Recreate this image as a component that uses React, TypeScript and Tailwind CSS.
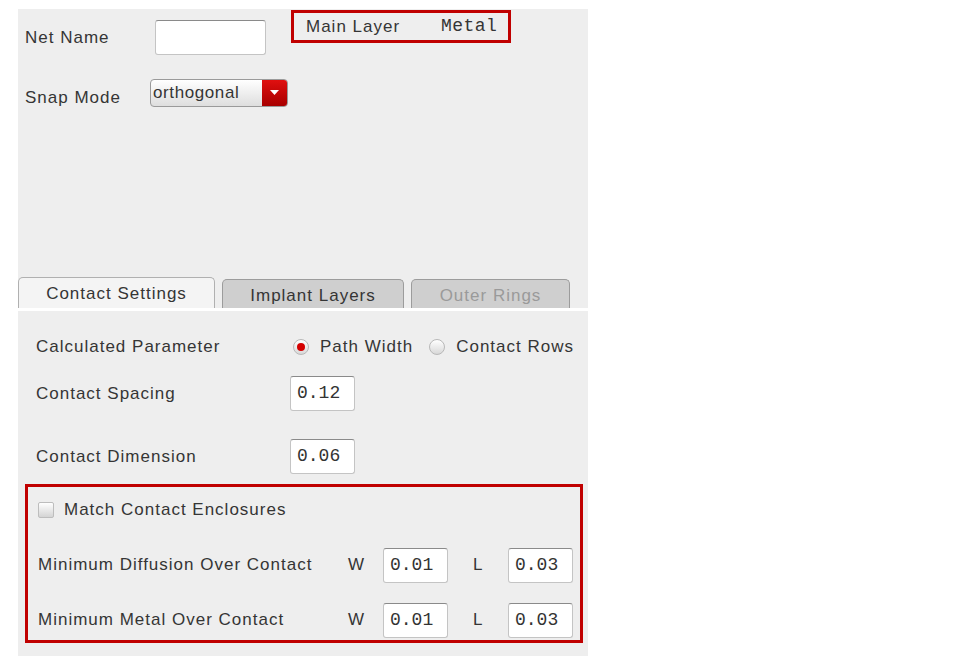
import React from 'react';

const sans = { fontFamily: '"Liberation Sans", Arial, sans-serif' };

function Field({ value, className = '' }: { value: string; className?: string }) {
  return (
    <div
      className={`flex h-[35px] w-[65px] items-center rounded-[3px] border border-[#c4c4c4] border-t-[#8a8a8a] bg-white pl-[6px] font-['Liberation_Mono',monospace] text-[18px] tracking-normal text-[#333] ${className}`}
    >
      {value}
    </div>
  );
}

function Radio({ on }: { on: boolean }) {
  return (
    <span className="flex h-[16px] w-[16px] items-center justify-center rounded-full border border-[#b8b8b8] bg-gradient-to-b from-white to-[#d8d8d8]">
      {on && <span className="h-[8px] w-[8px] rounded-full bg-[#d40000]" />}
    </span>
  );
}

export default function App() {
  return (
    <div
      className="h-[656px] w-[975px] overflow-hidden bg-white text-[17px] tracking-[1px] text-[#353535]"
      style={sans}
    >
      <div className="ml-[18px] pt-[9px] w-[570px]">
        {/* Top panel */}
        <div className="flex h-[299px] flex-col bg-[#eeeeee]">
          <div className="flex items-start">
            <span className="ml-[7px] mt-[16px] w-[130px]">Net Name</span>
            <div className="mt-[11px] h-[35px] w-[111px] rounded-[3px] border border-[#c4c4c4] border-t-[#8a8a8a] bg-white" />
            <div className="ml-[25px] mt-[1px] flex h-[33px] w-[220px] items-center border-[3px] border-[#c00000] pl-[12px]">
              <span>Main Layer</span>
              <span className="ml-[41px] font-['Liberation_Mono',monospace] text-[18px] tracking-[0.4px]">Metal</span>
            </div>
          </div>
          <div className="mt-[30px] flex items-center">
            <span className="ml-[7px] w-[125px]">Snap Mode</span>
            <div className="-mt-[10px] flex h-[28px] w-[138px] items-center overflow-hidden rounded-[4px] border border-[#9a9a9a] bg-gradient-to-b from-white to-[#dedede]">
              <span className="flex-1 pl-[2px] leading-none tracking-[0.6px]">orthogonal</span>
              <span className="flex h-full w-[25px] items-center justify-center bg-gradient-to-b from-[#e01010] to-[#a80000]">
                <svg width="9" height="6" viewBox="0 0 9 6">
                  <path d="M0 0h9L4.5 5z" fill="#fff" />
                </svg>
              </span>
            </div>
          </div>

          {/* Tabs */}
          <div className="mt-auto flex h-[31px] items-end gap-[7px]">
            <div className="flex h-[31px] w-[197px] items-center justify-center rounded-t-[5px] border border-b-0 border-[#b0b0b0] bg-[#f4f4f4] pt-[2px]">
              Contact Settings
            </div>
            <div className="flex h-[29px] w-[182px] items-center justify-center rounded-t-[5px] border border-b-0 border-[#9c9c9c] bg-[#cfcfcf] pt-[3px]">
              Implant Layers
            </div>
            <div className="flex h-[29px] w-[159px] items-center justify-center rounded-t-[5px] border border-b-0 border-[#9c9c9c] bg-[#cfcfcf] pt-[3px] text-[#9a9a9a]">
              Outer Rings
            </div>
          </div>
        </div>

        <div className="h-[3px] bg-white" />

        {/* Lower panel */}
        <div className="h-[345px] bg-[#eeeeee] pt-[25px]">
          <div className="flex h-[22px] items-center pl-[18px]">
            <span className="w-[257px]">Calculated Parameter</span>
            <Radio on />
            <span className="ml-[11px]">Path Width</span>
            <span className="ml-[16px]">
              <Radio on={false} />
            </span>
            <span className="ml-[11px]">Contact Rows</span>
          </div>
          <div className="mt-[18px] flex items-center pl-[18px]">
            <span className="w-[254px]">Contact Spacing</span>
            <Field value="0.12" />
          </div>
          <div className="mt-[28px] flex items-center pl-[18px]">
            <span className="w-[254px]">Contact Dimension</span>
            <Field value="0.06" />
          </div>

          <div className="ml-[7px] mt-[10px] h-[159px] w-[558px] border-[3px] border-[#c00000] pl-[10px]">
            <div className="mt-[10px] flex items-center">
              <span className="h-[16px] w-[16px] rounded-[2px] border border-[#bdbdbd] bg-gradient-to-b from-white to-[#d4d4d4]" />
              <span className="ml-[10px]">Match Contact Enclosures</span>
            </div>
            <div className="mt-[25px] flex items-center">
              <span className="w-[310px]">Minimum Diffusion Over Contact</span>
              <span className="w-[35px]">W</span>
              <Field value="0.01" />
              <span className="ml-[25px] w-[35px]">L</span>
              <Field value="0.03" />
            </div>
            <div className="mt-[20px] flex items-center">
              <span className="w-[310px]">Minimum Metal Over Contact</span>
              <span className="w-[35px]">W</span>
              <Field value="0.01" />
              <span className="ml-[25px] w-[35px]">L</span>
              <Field value="0.03" />
            </div>
          </div>
        </div>
      </div>
    </div>
  );
}
